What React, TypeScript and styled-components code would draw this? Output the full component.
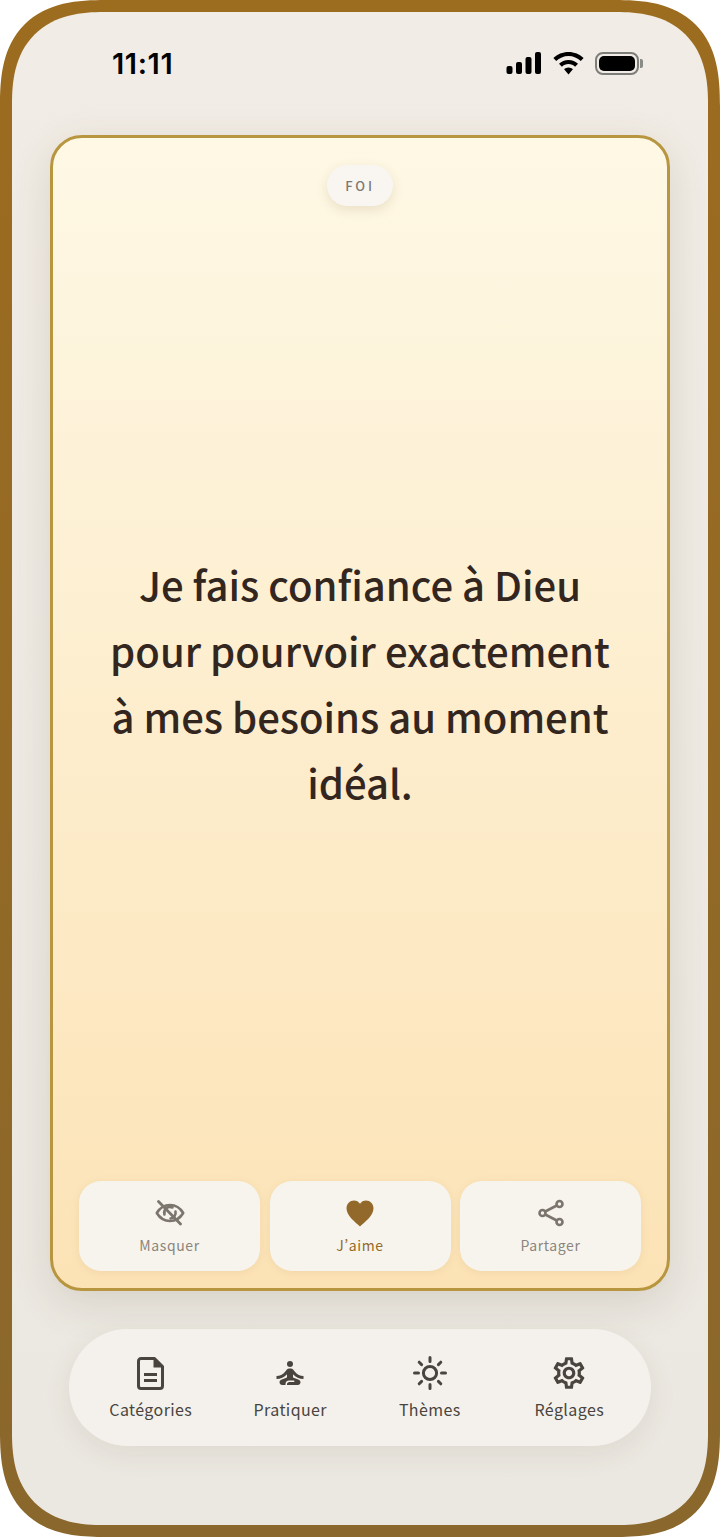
import { ReactNode } from "react";
import styled, { createGlobalStyle } from "styled-components";
import { MdOutlineSettings, MdSelfImprovement } from "react-icons/md";

const GlobalStyle = createGlobalStyle`
  html, body {
    margin: 0;
    padding: 0;
    background: #fff;
  }
  * {
    box-sizing: border-box;
  }
`;

const uiFont = `"Noto Sans CJK SC", "Noto Sans", sans-serif`;

const FileIcon = () => (
  <svg width="27" height="33" viewBox="0 0 27 33" fill="none">
    <path d="M4 1.500h13.500L25.500 9.500V29a2.500 2.500 0 0 1-2.500 2.500H4A2.500 2.500 0 0 1 1.500 29V4A2.500 2.500 0 0 1 4 1.500Z" stroke="currentColor" strokeWidth="3" strokeLinejoin="round" />
    <path d="M16.500 1.500l9 9h-9Z" fill="currentColor" />
    <path d="M7 17.500h13M7 23.500h13" stroke="currentColor" strokeWidth="3" />
  </svg>
);

const EyeOffIcon = () => (
  <svg width="30" height="26" viewBox="0 0 30 26" fill="none" stroke="currentColor" strokeWidth="2.600" strokeLinecap="round" strokeLinejoin="round">
    <path d="M1.800 13C5 7.600 9.600 5 15 5s10 2.600 13.200 8C25 18.400 20.400 21 15 21S5 18.400 1.800 13Z" />
    <path d="M9.500 14.500a5.800 5.800 0 0 1 8-7" />
    <path d="M20.500 11.500a5.800 5.800 0 0 1-5 7" />
    <path d="M3.500 1.500 25.500 24" strokeWidth="2.800" />
  </svg>
);

const HeartIcon = () => (
  <svg width="28" height="27" viewBox="0 0 28 27" fill="currentColor">
    <path d="M14 26.500C9.500 22.300.5 15.900.5 8.300.5 3.700 4 .5 8 .5c2.500 0 4.700 1.200 6 3.300C15.300 1.700 17.500.5 20 .5c4 0 7.500 3.200 7.500 7.800 0 7.600-9 14-13.500 18.200Z" />
  </svg>
);

const ShareIcon = () => (
  <svg width="28" height="30" viewBox="0 0 28 30" fill="none" stroke="currentColor" strokeWidth="2.600">
    <circle cx="5.500" cy="15" r="3" />
    <circle cx="22.500" cy="6" r="3" />
    <circle cx="22.500" cy="24" r="3" />
    <path d="M8.200 13.500 19.800 7.500M8.200 16.500l11.600 6" />
  </svg>
);

const SunIcon = () => (
  <svg width="36" height="36" viewBox="0 0 36 36" fill="none" stroke="currentColor" strokeWidth="3" strokeLinecap="round">
    <circle cx="18" cy="18" r="6.600" />
    <path d="M18 2.500v4M18 29.500v4M2.500 18h4M29.500 18h4M7.200 7.200l2.400 2.400M26.400 26.400l2.400 2.400M7.200 28.800l2.400-2.400M26.400 9.600l2.400-2.400" />
  </svg>
);

const SignalIcon = () => (
  <svg width="36" height="22" viewBox="0 0 36 22" fill="currentColor">
    <rect x="0.500" y="14" width="6" height="8" rx="2" />
    <rect x="10" y="10" width="6" height="12" rx="2" />
    <rect x="19.500" y="5" width="6" height="17" rx="2" />
    <rect x="29" y="0" width="6" height="22" rx="2" />
  </svg>
);

const WifiIcon = () => (
  <svg width="31" height="23" viewBox="0 0 31 23" fill="currentColor">
    <path d="M15.500 0C9.600 0 4.300 2.300.4 6.100l2.800 3C6.400 6 10.700 4 15.500 4s9.100 2 12.300 5.100l2.800-3C26.700 2.300 21.400 0 15.500 0Z" />
    <path d="M15.500 8c-3.700 0-7 1.400-9.500 3.800l2.900 3c1.700-1.600 4-2.700 6.600-2.700s4.900 1.100 6.600 2.700l2.900-3C22.500 9.400 19.200 8 15.500 8Z" />
    <path d="M15.500 15.500c-1.800 0-3.300.7-4.400 1.800l4.400 5.200 4.400-5.200c-1.100-1.100-2.600-1.800-4.400-1.800Z" />
  </svg>
);

const Phone = styled.div`
  width: 720px;
  height: 1537px;
  padding: 12px;
  border-radius: 106px;
  corner-shape: superellipse(1.4);
  background: linear-gradient(180deg, #9c6c1f 0%, #8a672c 100%);
`;

const Screen = styled.div`
  height: 100%;
  border-radius: 92px;
  corner-shape: superellipse(1.3);
  background: linear-gradient(180deg, #f1ece5 0%, #ebe8e1 100%);
  display: flex;
  flex-direction: column;
`;

const StatusBar = styled.div`
  height: 123px;
  padding: 38px 69px 0 100px;
  display: flex;
  justify-content: space-between;
  align-items: flex-start;
  color: #000;
`;

const Time = styled.span`
  font: 600 29px/28px Inter, sans-serif;
  letter-spacing: 0.6px;
`;

const StatusIcons = styled.div`
  display: flex;
  align-items: center;
  gap: 11px;
  height: 24px;
  margin-top: 1px;
`;

const Battery = styled.div`
  position: relative;
  width: 44px;
  height: 23px;
  padding: 2px;
  border: 2px solid #7d7d7a;
  border-radius: 8px;
  &::after {
    content: "";
    position: absolute;
    right: -6px;
    top: 5px;
    width: 3px;
    height: 9px;
    border-radius: 0 2px 2px 0;
    background: #8a8a86;
  }
`;

const BatteryFill = styled.div`
  width: 100%;
  height: 100%;
  border-radius: 5px;
  background: #000;
`;

const Card = styled.section`
  width: 620px;
  height: 1156px;
  margin-left: 38px;
  padding: 27px 26px 17px;
  border: 3px solid #b7963f;
  border-radius: 32px;
  background: linear-gradient(180deg, #fef8e5 0%, #fce3b6 100%);
  box-shadow: 0 12px 40px rgba(90, 70, 40, 0.14);
  display: flex;
  flex-direction: column;
  align-items: center;
`;

const Pill = styled.div`
  width: 66px;
  height: 41px;
  border-radius: 21px;
  background: #f9f6f2;
  box-shadow: 0 4px 12px rgba(120, 90, 40, 0.14);
  color: #7d7871;
  font: 500 13px/41px ${uiFont};
  letter-spacing: 2.800px;
  text-align: center;
`;

const QuoteArea = styled.div`
  flex: 1;
  width: 100%;
  padding-bottom: 22px;
  display: flex;
  align-items: center;
  justify-content: center;
`;

const Quote = styled.p`
  margin: 0;
  width: 520px;
  font: 500 40px/66px ${uiFont};
  color: #33261f;
  text-align: center;
`;

const Actions = styled.div`
  width: 100%;
  display: grid;
  grid-template-columns: repeat(3, 181px);
  justify-content: space-between;
  gap: 9px;
`;

const ActionButton = styled.div<{ $active?: boolean }>`
  height: 90px;
  padding-top: 17px;
  border-radius: 22px;
  background: #f7f4ee;
  box-shadow: 0 2px 8px rgba(150, 110, 50, 0.1);
  display: flex;
  flex-direction: column;
  align-items: center;
  color: ${({ $active }) => ($active ? "#92692a" : "#7b756d")};
`;

const ActionIcon = styled.div`
  height: 30px;
  display: flex;
  align-items: center;
  justify-content: center;
`;

const ActionLabel = styled.span<{ $active?: boolean }>`
  margin-top: 6px;
  font: 400 14px/22px ${uiFont};
  font-feature-settings: "pwid";
  letter-spacing: 0.6px;
  color: ${({ $active }) => ($active ? "#946a26" : "#8b857d")};
`;

const TabBar = styled.nav`
  width: 582px;
  height: 117px;
  margin: 38px 0 0 57px;
  padding: 0 12px;
  border-radius: 59px;
  background: #f4f1ec;
  box-shadow: 0 8px 28px rgba(90, 70, 40, 0.09);
  display: grid;
  grid-template-columns: repeat(4, 1fr);
`;

const Tab = styled.div`
  padding-top: 26px;
  display: flex;
  flex-direction: column;
  align-items: center;
  color: #49443e;
`;

const TabIcon = styled.div`
  height: 36px;
  display: flex;
  align-items: center;
  justify-content: center;
`;

const TabLabel = styled.span`
  margin-top: 6px;
  font: 400 16px/25px ${uiFont};
  letter-spacing: 0.4px;
`;

const actions: { label: string; icon: ReactNode; active?: boolean }[] = [
  { label: "Masquer", icon: <EyeOffIcon /> },
  { label: "J’aime", icon: <HeartIcon />, active: true },
  { label: "Partager", icon: <ShareIcon /> },
];

const tabs: { label: string; icon: ReactNode }[] = [
  { label: "Catégories", icon: <FileIcon /> },
  { label: "Pratiquer", icon: <MdSelfImprovement size={36} /> },
  { label: "Thèmes", icon: <SunIcon /> },
  { label: "Réglages", icon: <MdOutlineSettings size={38} /> },
];

export default function App() {
  return (
    <>
      <GlobalStyle />
      <Phone>
        <Screen>
          <StatusBar>
            <Time>11:11</Time>
            <StatusIcons>
              <SignalIcon />
              <WifiIcon />
              <Battery>
                <BatteryFill />
              </Battery>
            </StatusIcons>
          </StatusBar>
          <Card>
            <Pill>FOI</Pill>
            <QuoteArea>
              <Quote>
                Je fais confiance à Dieu
                <br />
                pour pourvoir exactement
                <br />à mes besoins au moment
                <br />
                idéal.
              </Quote>
            </QuoteArea>
            <Actions>
              {actions.map((item) => (
                <ActionButton key={item.label} $active={item.active}>
                  <ActionIcon>{item.icon}</ActionIcon>
                  <ActionLabel $active={item.active}>{item.label}</ActionLabel>
                </ActionButton>
              ))}
            </Actions>
          </Card>
          <TabBar>
            {tabs.map((item) => (
              <Tab key={item.label}>
                <TabIcon>{item.icon}</TabIcon>
                <TabLabel>{item.label}</TabLabel>
              </Tab>
            ))}
          </TabBar>
        </Screen>
      </Phone>
    </>
  );
}
